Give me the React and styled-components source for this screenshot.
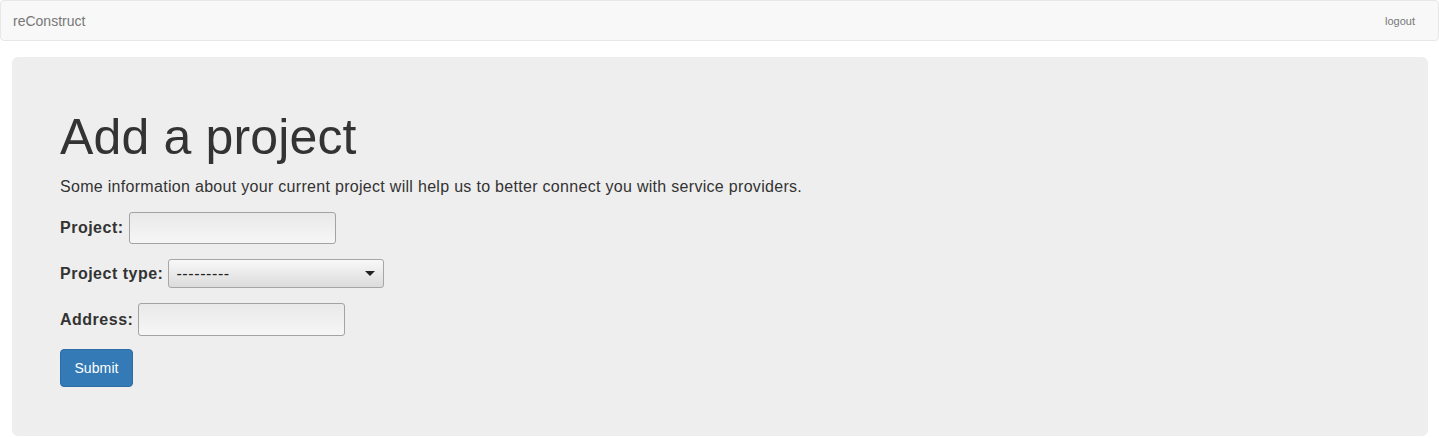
import React from "react";
import styled, { createGlobalStyle } from "styled-components";

const Global = createGlobalStyle`
  html, body { margin: 0; padding: 0; background: #fff; }
  body { font-family: "Liberation Sans", Arial, sans-serif; color: #333; }
  * { box-sizing: border-box; }
`;

const Navbar = styled.nav`
  height: 41px;
  background: #f8f8f8;
  border: 1px solid #e7e7e7;
  border-radius: 4px;
  display: flex;
  align-items: center;
  justify-content: space-between;
  padding: 0 23px 0 12px;
  margin-bottom: 16px;
`;

const Brand = styled.a`
  font-size: 14px;
  color: #777;
  text-decoration: none;
`;

const NavLink = styled.a`
  font-size: 11px;
  color: #777;
  text-decoration: none;
`;

const Jumbotron = styled.section`
  margin: 0 11px 0 12px;
  background: #eee;
  border-radius: 6px;
  height: 379px;
  padding: 53px 48px 48px;
`;

const Title = styled.h1`
  margin: 0;
  font-size: 50px;
  font-weight: 400;
  line-height: 55px;
  letter-spacing: 0.15px;
  color: #333;
`;

const Lead = styled.p`
  margin: 11px 0 15px;
  font-size: 16px;
  line-height: 21px;
  letter-spacing: 0.3px;
`;

const Form = styled.form`
  display: flex;
  flex-direction: column;
  align-items: flex-start;
`;

const Row = styled.div`
  display: flex;
  align-items: center;
  gap: 5px;
  margin-bottom: ${(p) => p.$mb}px;
`;

const Label = styled.label`
  font-size: 16px;
  font-weight: 700;
  letter-spacing: 0.5px;
`;

const Input = styled.input`
  width: 207px;
  height: ${(p) => p.$h}px;
  border: 1px solid #a3a3a3;
  border-radius: 3px;
  background: linear-gradient(#e9e9e9, #f6f6f6);
  font: inherit;
  padding: 0 6px;
`;

const SelectBox = styled.div`
  position: relative;
  width: 216px;
  height: 29px;
  border: 1px solid #a6a6a6;
  border-radius: 3px;
  background: linear-gradient(#f8f8f8, #dcdcdc);
  font-size: 16px;
  letter-spacing: 0.6px;
  display: flex;
  align-items: center;
  padding: 0 7px;
  color: #222;
`;

const Caret = styled.span`
  position: absolute;
  right: 8px;
  top: 11px;
  width: 0;
  height: 0;
  border-left: 5px solid transparent;
  border-right: 5px solid transparent;
  border-top: 5px solid #222;
`;

const Button = styled.button`
  width: 73px;
  height: 38px;
  padding: 0;
  background: #337ab7;
  border: 1px solid #2e6da4;
  border-radius: 4px;
  color: #fff;
  font-family: inherit;
  font-size: 14px;
  letter-spacing: 0.1px;
`;

export default function App() {
  return (
    <>
      <Global />
      <Navbar>
        <Brand href="#">reConstruct</Brand>
        <NavLink href="#">logout</NavLink>
      </Navbar>
      <Jumbotron>
        <Title>Add a project</Title>
        <Lead>
          Some information about your current project will help us to better connect you with service providers.
        </Lead>
        <Form onSubmit={(e) => e.preventDefault()}>
          <Row $mb={15}>
            <Label>Project:</Label>
            <Input $h={32} />
          </Row>
          <Row $mb={15}>
            <Label>Project type:</Label>
            <SelectBox>
              ---------
              <Caret />
            </SelectBox>
          </Row>
          <Row $mb={13}>
            <Label>Address:</Label>
            <Input $h={33} />
          </Row>
          <Button type="submit">Submit</Button>
        </Form>
      </Jumbotron>
    </>
  );
}
